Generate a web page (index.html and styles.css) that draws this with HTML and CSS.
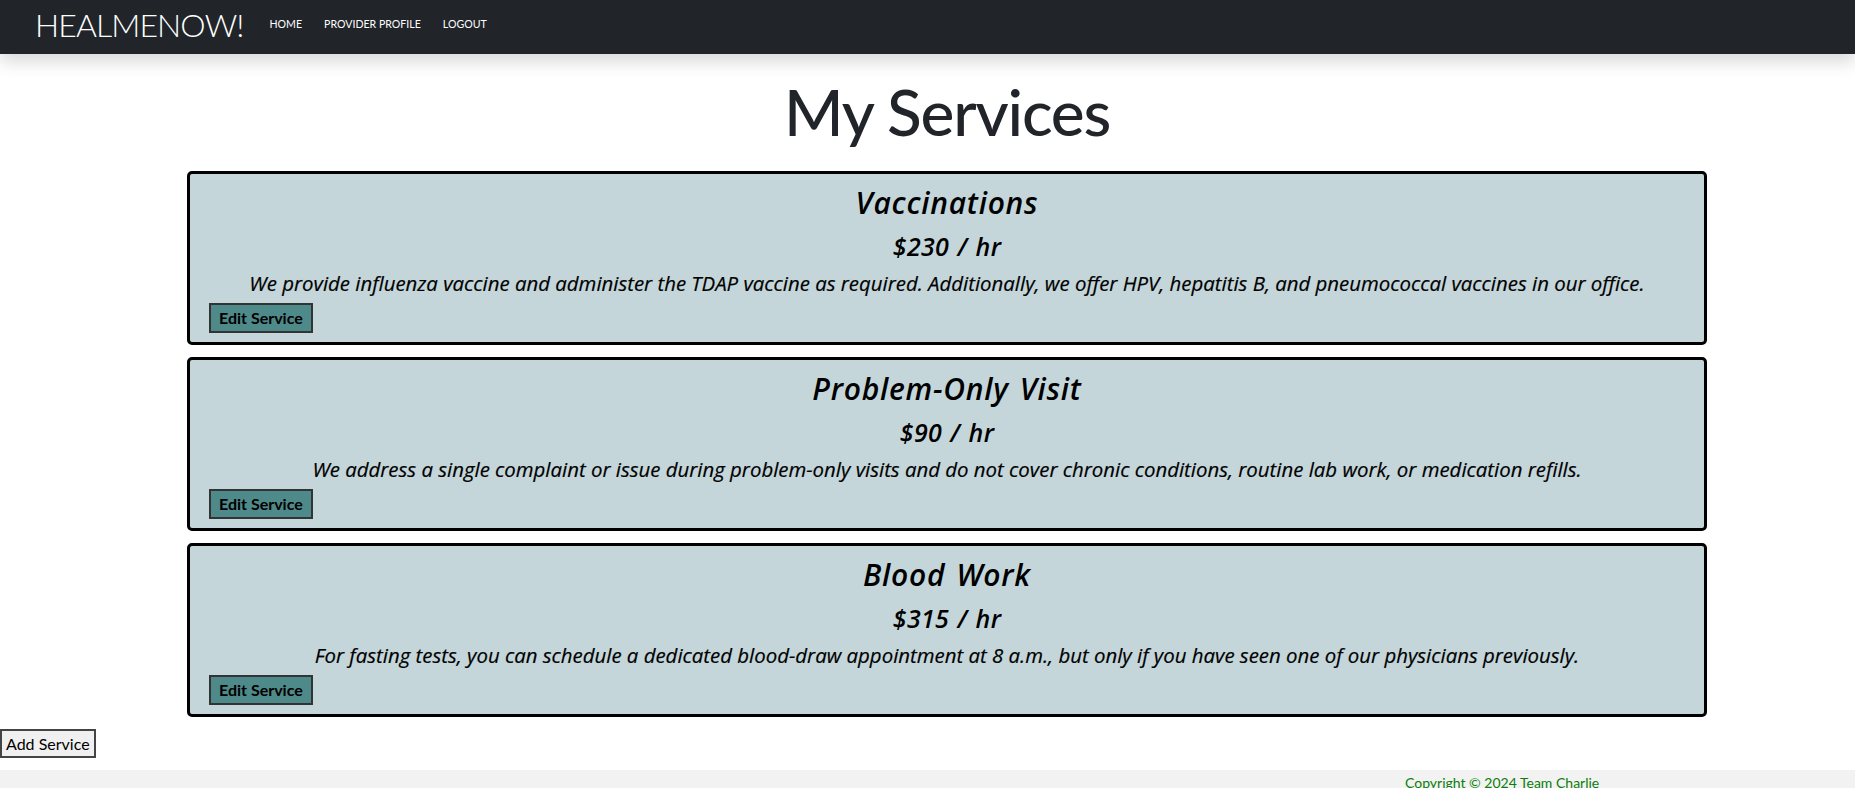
FILE: index.html
```html
<!DOCTYPE html>
<html lang="en">
<head>
<meta charset="utf-8">
<title>My Services - HEALMENOW!</title>
<link rel="stylesheet" href="styles.css">
</head>
<body>
<nav class="navbar">
  <a class="brand" href="#">HEALMENOW!</a>
  <ul class="nav-links">
    <li><a href="#">HOME</a></li>
    <li><a href="#">PROVIDER PROFILE</a></li>
    <li><a href="#">LOGOUT</a></li>
  </ul>
</nav>
<main class="content">
  <h1 class="page-title">My Services</h1>
  <div class="service-list">
    <div class="service-card">
      <h3 class="service-name">Vaccinations</h3>
      <h4 class="service-price">$230 / hr</h4>
      <h5 class="service-desc">We provide influenza vaccine and administer the TDAP vaccine as required. Additionally, we offer HPV, hepatitis B, and pneumococcal vaccines in our office.</h5>
      <div class="card-actions"><button class="edit-btn">Edit Service</button></div>
    </div>
    <div class="service-card">
      <h3 class="service-name">Problem-Only Visit</h3>
      <h4 class="service-price">$90 / hr</h4>
      <h5 class="service-desc">We address a single complaint or issue during problem-only visits and do not cover chronic conditions, routine lab work, or medication refills.</h5>
      <div class="card-actions"><button class="edit-btn">Edit Service</button></div>
    </div>
    <div class="service-card">
      <h3 class="service-name">Blood Work</h3>
      <h4 class="service-price">$315 / hr</h4>
      <h5 class="service-desc">For fasting tests, you can schedule a dedicated blood-draw appointment at 8 a.m., but only if you have seen one of our physicians previously.</h5>
      <div class="card-actions"><button class="edit-btn">Edit Service</button></div>
    </div>
  </div>
</main>
<div class="add-row"><button class="add-btn">Add Service</button></div>
<footer class="footer"><span class="copyright">Copyright © 2024 Team Charlie</span></footer>
</body>
</html>
```
FILE: styles.css
```css
* { box-sizing: border-box; }
html, body { margin: 0; padding: 0; }
body {
  font-family: Lato, "Liberation Sans", sans-serif;
  color: #212529;
  background: #fff;
  font-size: 16px;
}
.navbar {
  height: 54px;
  background: #212529;
  display: flex;
  align-items: flex-start;
  padding-left: 35px;
  box-shadow: 0 8px 16px rgba(0,0,0,0.15);
  position: relative;
}
.brand {
  color: #fff;
  text-decoration: none;
  font-size: 32px;
  font-weight: 300;
  line-height: 38px;
  letter-spacing: -0.9px;
  margin-top: 6px;
  margin-right: 26px;
}
.nav-links {
  list-style: none;
  margin: 12px 0 0;
  padding: 0;
  display: flex;
  gap: 22px;
}
.nav-links a {
  color: #fff;
  text-decoration: none;
  font-size: 10.6px;
  line-height: 14px;
}
.content {
  margin-left: 187px;
  margin-right: 148px;
}
.page-title {
  text-align: center;
  font-size: 64px;
  font-weight: 500;
  line-height: 76px;
  letter-spacing: -1.2px;
  margin: 20px 0 21px;
}
.service-list {
  display: flex;
  flex-direction: column;
  gap: 12px;
}
.service-card {
  background: #c4d6da;
  border: 3px solid #000;
  border-radius: 5px;
  padding: 11px 19px 9px;
  text-align: center;
  color: #000;
  height: 174px;
  font-family: "Open Sans", Lato, sans-serif;
}
.service-name {
  margin: 0;
  font-size: 30px;
  line-height: 35px;
  font-style: italic;
  font-weight: 600;
  letter-spacing: 0.75px;
  word-spacing: 2.5px;
}
.service-price {
  margin: 12px 0 0;
  font-size: 25px;
  line-height: 29px;
  font-style: italic;
  font-weight: 600;
  letter-spacing: 0.3px;
  word-spacing: 1.5px;
}
.service-desc {
  margin: 10px 0 0;
  font-size: 20.4px;
  line-height: 24px;
  font-style: italic;
  font-weight: 500;
  -webkit-text-stroke: 0.2px #000;
}
.card-actions {
  text-align: left;
  margin-top: 8px;
}
.edit-btn {
  font-family: Lato, sans-serif;
  background: #4f8a8b;
  border: 2px solid #333;
  color: #000;
  font-weight: 700;
  font-size: 16px;
  height: 30px;
  padding: 0 8px;
  line-height: 26px;
}
.add-row {
  margin: 12px 0;
}
.add-btn {
  font-family: inherit;
  background: #f0f0f0;
  border: 2px solid #444;
  color: #000;
  font-size: 16px;
  height: 29px;
  padding: 0 4px;
  line-height: 25px;
}
.footer {
  background: #f2f2f2;
  padding: 2px 0 20px 1405px;
}
.copyright {
  color: #0a7d0a;
  font-size: 14px;
  line-height: 19px;
  font-weight: 400;
}
```
